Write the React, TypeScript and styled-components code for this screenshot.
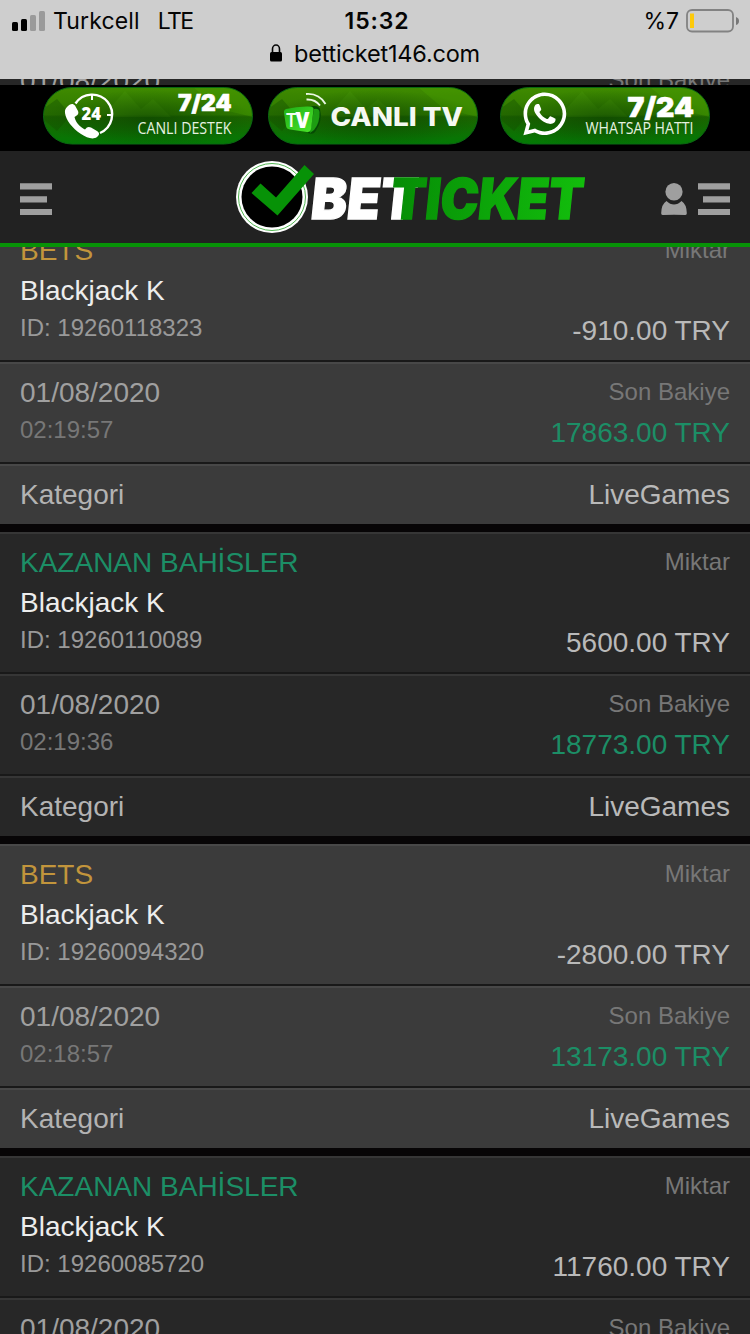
import React from "react";
import styled, { createGlobalStyle } from "styled-components";
import { FaWhatsapp } from "react-icons/fa";

const GlobalStyle = createGlobalStyle`
  * { box-sizing: border-box; }
  body { margin: 0; background: #070506; }
`;

const Screen = styled.div`
  position: relative;
  width: 750px;
  height: 1334px;
  overflow: hidden;
  background: #070506;
  font-family: "Liberation Sans", Arial, sans-serif;
`;

/* ---------- browser status bar ---------- */

const StatusBar = styled.header`
  position: absolute;
  inset: 0 0 auto 0;
  height: 79px;
  background: #cecece;
  color: #050505;
  font-family: Inter, "Liberation Sans", sans-serif;
  z-index: 3;
`;

const StatusRow = styled.div`
  display: grid;
  grid-template-columns: 1fr auto 1fr;
  align-items: center;
  height: 40px;
  padding: 1px 11px 0 12px;
  font-size: 23px;
`;

const Carrier = styled.div`
  display: flex;
  align-items: center;
  gap: 8px;
  white-space: pre;
`;

const CarrierName = styled.span`
  letter-spacing: 0.15px;
`;

const Network = styled.span`
  margin-left: 10px;
  letter-spacing: -1.6px;
`;

const Clock = styled.div`
  padding-left: 3px;
  font-weight: 600;
  letter-spacing: 0.9px;
`;

const Power = styled.div`
  display: flex;
  justify-content: flex-end;
  align-items: center;
  gap: 7px;
`;

const Address = styled.div`
  display: flex;
  justify-content: center;
  align-items: center;
  gap: 12px;
  height: 26px;
  font-size: 23.5px;
  letter-spacing: -0.2px;
`;

/* ---------- site header ---------- */

const SiteHeader = styled.div`
  position: absolute;
  inset: 85px 0 auto 0;
  height: 162px;
  z-index: 2;
`;

const Promos = styled.div`
  display: flex;
  align-items: flex-start;
  height: 66px;
  padding: 2px 0 0 43px;
  background: #000;
`;

const Promo = styled.svg<{ $gap?: number }>`
  display: block;
  width: 210px;
  height: 58px;
  margin-left: ${(p) => p.$gap ?? 0}px;
`;

const NavBar = styled.nav`
  display: flex;
  align-items: flex-start;
  height: 96px;
  padding: 9px 20px 0;
  background: #222;
  border-bottom: 4px solid #079207;
`;

const Logo = styled.svg`
  display: block;
  width: 352px;
  height: 76px;
  margin-left: 184px;
`;

const Account = styled.div`
  display: flex;
  gap: 11px;
  margin-left: auto;
`;

const NavIcon = styled.svg`
  display: block;
  height: 32px;
  margin-top: 23px;
  fill: #9f9f9f;
`;

/* ---------- transactions ---------- */

const List = styled.main`
  display: flex;
  flex-direction: column;
  gap: 8px;
  padding-top: 50px;
`;

const Card = styled.article<{ $light: boolean }>`
  background: ${(p) => (p.$light ? "#3b3b3b" : "#272727")};
  --edge: ${(p) => (p.$light ? "#484848" : "#363636")};
`;

const Row = styled.div<{ $height: number }>`
  display: flex;
  justify-content: space-between;
  height: ${(p) => p.$height}px;
  padding: 8px 20px 10px;
  border-top: 2px solid var(--edge);
  border-bottom: 2px solid #191919;
  &:last-child {
    border-bottom: 0;
  }
`;

const Column = styled.div<{ $end?: boolean }>`
  display: flex;
  flex-direction: column;
  justify-content: ${(p) => (p.$end ? "space-between" : "flex-start")};
  align-items: ${(p) => (p.$end ? "flex-end" : "flex-start")};
`;

const Text = styled.span<{ $color: string }>`
  margin: 1px 0 -1px;
  font-size: 28px;
  line-height: 40px;
  color: ${(p) => p.$color};
  white-space: nowrap;
`;

const Small = styled(Text)`
  margin: 0;
  font-size: 24px;
  line-height: 36px;
`;

const Label = styled(Text)`
  margin: 0;
  font-size: 24px;
`;

const green = "#1c8e66";
const gold = "#c2953c";

type Entry = {
  win: boolean;
  id?: string;
  amount?: string;
  time?: string;
  balance?: string;
};

const entries: Entry[] = [
  { win: true },
  { win: false, id: "19260118323", amount: "-910.00", time: "02:19:57", balance: "17863.00" },
  { win: true, id: "19260110089", amount: "5600.00", time: "02:19:36", balance: "18773.00" },
  { win: false, id: "19260094320", amount: "-2800.00", time: "02:18:57", balance: "13173.00" },
  { win: true, id: "19260085720", amount: "11760.00" },
];

const Transaction = ({ entry }: { entry: Entry }) => (
  <Card $light={!entry.win}>
    {entry.id && (
      <Row $height={142}>
        <Column>
          <Text $color={entry.win ? green : gold}>{entry.win ? "KAZANAN BAHİSLER" : "BETS"}</Text>
          <Text $color="#ededed">Blackjack K</Text>
          <Small $color="#999">ID: {entry.id}</Small>
        </Column>
        <Column $end>
          <Label $color="#777">Miktar</Label>
          <Text $color="#b9b9b9">{entry.amount} TRY</Text>
        </Column>
      </Row>
    )}
    <Row $height={entry.balance ? 102 : 162}>
      <Column>
        <Text $color="#a0a0a0">01/08/2020</Text>
        {entry.time && <Small $color="#777">{entry.time}</Small>}
      </Column>
      <Column $end>
        <Label $color="#777">Son Bakiye</Label>
        {entry.balance && <Text $color={green}>{entry.balance} TRY</Text>}
      </Column>
    </Row>
    {entry.balance && (
      <Row $height={60}>
        <Text $color="#b3b3b3">Kategori</Text>
        <Text $color="#b9b9b9">LiveGames</Text>
      </Row>
    )}
  </Card>
);

const PillBase = ({ id }: { id: string }) => (
  <>
    <defs>
      <linearGradient id={`${id}-fill`} x1="0" y1="0" x2="0" y2="1">
        <stop offset="0" stopColor="#3f8a00" />
        <stop offset="0.48" stopColor="#2f7a00" />
        <stop offset="0.52" stopColor="#1c6400" />
        <stop offset="1" stopColor="#037a05" />
      </linearGradient>
      <radialGradient id={`${id}-shade`} cx="0.5" cy="0.55" r="0.5">
        <stop offset="0" stopColor="#0a3d00" stopOpacity="0.6" />
        <stop offset="1" stopColor="#0a3d00" stopOpacity="0" />
      </radialGradient>
      <clipPath id={`${id}-clip`}>
        <rect x="1" y="1" width="208" height="55.5" rx="27.700" />
      </clipPath>
    </defs>
    <rect x="0.5" y="0.5" width="209" height="56.500" rx="28.200" fill={`url(#${id}-fill)`} stroke="#0b6a12" />
    <g clipPath={`url(#${id}-clip)`}>
      <path d="M0 22 14 12 28 28 14 44 0 32Z" fill="#144f00" opacity="0.4" />
      <path d="M66 22 82 4 98 22 110 12 128 30H66Z" fill="#4c9a0a" opacity="0.3" />
      <path d="M150 0H210V30L176 22Z" fill="#4fa800" opacity="0.3" />
      <rect width="210" height="58" fill={`url(#${id}-shade)`} />
    </g>
  </>
);

const SupportPromo = () => (
  <Promo viewBox="0 0 210 58">
    <PillBase id="support" />
    <path d="M32.5 16.5A20 20 0 1 1 57 46" fill="none" stroke="#fff" strokeWidth="2.4" />
    <path d="M49 8v5M69 28h-5" stroke="#fff" strokeWidth="2" />
    <path
      d="M24 20C27 16.500 30 16 32 18.500L35 24C36 26.500 35 28 31.500 30C33 36 37 40 42 42.500C44 39.500 46 39.500 48 40.500L54 44C57 46 56.500 48 54 50C50 53 44 51 38 47C29 41 23 33 22 26C21.700 23 22.500 21.500 24 20Z"
      fill="#fff"
    />
    <text x="38.500" y="32.500" textLength="19.500" lengthAdjust="spacingAndGlyphs" fill="#fff" fontFamily="Open Sans, sans-serif" fontWeight="800" fontSize="17">24</text>
    <text x="135" y="23.800" textLength="53.500" lengthAdjust="spacingAndGlyphs" fill="#fff" stroke="#fff" strokeWidth="0.6" fontFamily="Inter, sans-serif" fontWeight="900" fontSize="22.500">7/24</text>
    <text x="94.500" y="46.500" textLength="94" lengthAdjust="spacingAndGlyphs" fill="#e6f2e0" fontFamily="Open Sans, sans-serif" fontSize="15.500">CANLI DESTEK</text>
  </Promo>
);

const TvPromo = () => (
  <Promo $gap={15} viewBox="0 0 210 58">
    <defs>
      <linearGradient id="tv-face" x1="0" y1="0" x2="1" y2="1">
        <stop offset="0" stopColor="#1fae16" />
        <stop offset="1" stopColor="#4be52a" />
      </linearGradient>
    </defs>
    <PillBase id="tv" />
    <path d="M40 20Q50 17 52 22Q55 34 47 45Q45 48 40 46Z" fill="#064a04" />
    <path d="M46 22Q51 21 51.500 25Q52 36 46 43L42 46Z" fill="#1d9d12" />
    <path d="M18 22Q30 19 42 19.500Q46 19.500 45.500 23L43 42Q42.500 45.500 39 45L22 42.500Q18.500 42 18 39L16 26Q15.500 23 18 22Z" fill="url(#tv-face)" />
    <text transform="translate(18 40)" fill="#f2fff0" fontFamily="Open Sans, sans-serif" fontWeight="600" fontSize="20" textLength="10.500" lengthAdjust="spacingAndGlyphs">T</text>
    <text transform="translate(27.500 41)" fill="#fff" fontFamily="Open Sans, sans-serif" fontWeight="800" fontSize="22" textLength="14" lengthAdjust="spacingAndGlyphs">V</text>
    <path d="M38 7Q51 6 57.500 17M38.500 12.500Q47 12 52 18.500" fill="none" stroke="#e9f7e3" strokeWidth="1.900" />
    <text x="62.500" y="39.300" textLength="132.500" lengthAdjust="spacingAndGlyphs" fill="#f4f8f2" fontFamily="Inter, sans-serif" fontWeight="800" fontSize="25.500">CANLI TV</text>
  </Promo>
);

const WhatsappPromo = () => (
  <Promo $gap={22} viewBox="0 0 210 58">
    <PillBase id="whatsapp" />
    <FaWhatsapp size={49} x="20.300" y="2.400" color="#fff" />
    <text x="127.500" y="29.600" textLength="66.500" lengthAdjust="spacingAndGlyphs" fill="#fff" stroke="#fff" strokeWidth="0.6" fontFamily="Inter, sans-serif" fontWeight="900" fontSize="27.500">7/24</text>
    <text x="85.500" y="46.500" textLength="108" lengthAdjust="spacingAndGlyphs" fill="#e6f2e0" fontFamily="Open Sans, sans-serif" fontSize="15.500">WHATSAP HATTI</text>
  </Promo>
);

const BrandLogo = () => (
  <Logo viewBox="0 0 352 76">
    <defs>
      <linearGradient id="brand" gradientUnits="userSpaceOnUse" x1="0" y1="0" x2="190" y2="0">
        <stop offset="0" stopColor="#068d06" />
        <stop offset="1" stopColor="#12bd0c" />
      </linearGradient>
    </defs>
    <circle cx="36" cy="37" r="36" fill="#fff" />
    <circle cx="36" cy="37" r="33.500" fill="none" stroke="#3fae3f" strokeWidth="0.900" />
    <circle cx="36" cy="37" r="30.500" fill="#000" />
    <path d="M15.500 33 24.500 23.500 40 37.500 68.500 5 78 14 41.500 55.500Z" fill="#079207" />
    <g fontFamily="Inter, sans-serif" fontWeight="900" fontSize="56.500">
      <text transform="translate(73.500 59.200) skewX(-6)" fill="#fff" stroke="#fff" strokeWidth="1.400" textLength="106" lengthAdjust="spacingAndGlyphs">BET</text>
      <text transform="translate(153 59.200) skewX(-6)" fill="url(#brand)" stroke="url(#brand)" strokeWidth="1.400" textLength="192.500" lengthAdjust="spacingAndGlyphs">TICKET</text>
    </g>
  </Logo>
);

export default function App() {
  return (
    <>
      <GlobalStyle />
      <Screen>
        <StatusBar>
          <StatusRow>
            <Carrier>
              <svg width="33" height="20" viewBox="0 0 33 20">
                <rect x="0" y="11" width="6" height="9" rx="1.500" />
                <rect x="9" y="8" width="6" height="12" rx="1.500" />
                <rect x="18" y="4" width="6" height="16" rx="1.500" fill="#9a9a9a" />
                <rect x="27" y="0" width="6" height="20" rx="1.500" fill="#9a9a9a" />
              </svg>
              <CarrierName>Turkcell</CarrierName>
              <Network>LTE</Network>
            </Carrier>
            <Clock>15:32</Clock>
            <Power>
              <span>%7</span>
              <svg width="53" height="24" viewBox="0 0 53 24">
                <rect x="1" y="1" width="46" height="21.500" rx="5" fill="none" stroke="#828282" strokeWidth="1.800" />
                <rect x="4" y="4.500" width="4" height="14.500" fill="#fdca0b" />
                <path d="M50 8Q53 9 53 12T50 16Z" fill="#777" />
              </svg>
            </Power>
          </StatusRow>
          <Address>
            <svg width="12" height="18" viewBox="0 0 12 18">
              <path d="M2.500 9V5a3.500 4 0 0 1 7 0V9" fill="none" stroke="#050505" strokeWidth="1.600" />
              <rect y="8" width="12" height="9.500" rx="1.500" />
            </svg>
            <span>betticket146.com</span>
          </Address>
        </StatusBar>

        <SiteHeader>
          <Promos>
            <SupportPromo />
            <TvPromo />
            <WhatsappPromo />
          </Promos>
          <NavBar>
            <NavIcon width="32" viewBox="0 0 32 32">
              <path d="M0 0.300H32V6.500H0ZM0 13.200H27V19.400H0ZM0 26H32V32H0Z" />
            </NavIcon>
            <BrandLogo />
            <Account>
              <NavIcon width="26" viewBox="0 0 26 32">
                <ellipse cx="13" cy="8.800" rx="8.600" ry="8.800" />
                <path d="M5.500 18Q9 21.500 13 21.500T20.500 18Q25.500 21 25.800 30Q26 32.300 23.500 32Q13 31.400 2.500 32Q0 32.300 0.200 30Q0.500 21 5.500 18Z" />
              </NavIcon>
              <NavIcon width="32" viewBox="0 0 32 32">
                <path d="M0 0.300H32V6.500H0ZM5 13.200H32V19.400H5ZM0 26H32V32H0Z" />
              </NavIcon>
            </Account>
          </NavBar>
        </SiteHeader>

        <List>
          {entries.map((entry, index) => (
            <Transaction key={index} entry={entry} />
          ))}
        </List>
      </Screen>
    </>
  );
}
